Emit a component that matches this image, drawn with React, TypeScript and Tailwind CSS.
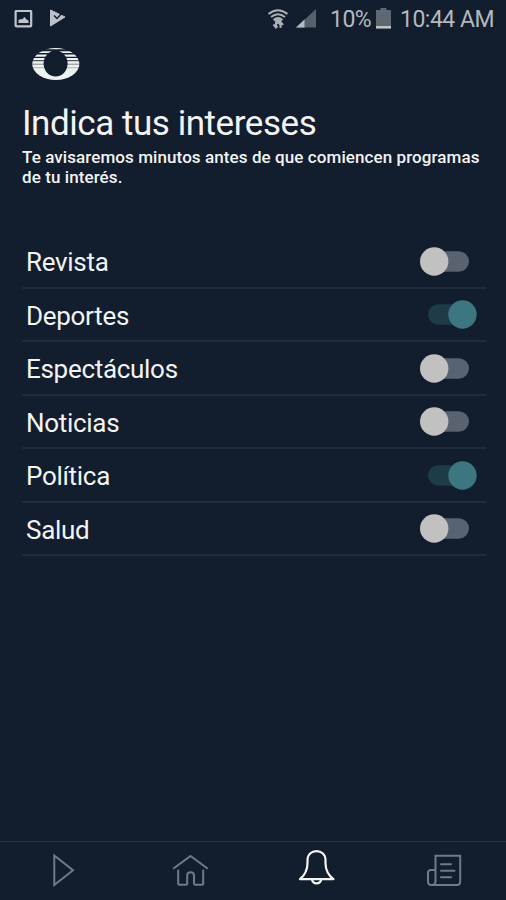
import { useState } from "react";

const interests = [
  { label: "Revista", on: false },
  { label: "Deportes", on: true },
  { label: "Espectáculos", on: false },
  { label: "Noticias", on: false },
  { label: "Política", on: true },
  { label: "Salud", on: false },
];

function StatusBar() {
  return (
    <div className="h-[38px] flex items-center justify-between pl-[14px] pr-[12px] text-[#b4b8be]">
      <div className="flex items-center gap-[16px]">
        <svg width="19" height="19" viewBox="0 0 19 19">
          <rect x="1.6" y="0.8" width="15.6" height="15.6" rx="1" fill="none" stroke="#c0c5cd" strokeWidth="2.2" />
          <path d="M4.5 13V10L7 9L8 9.5L10.5 7L12.5 9.5L14.5 10.5V13Z" fill="#c0c5cd" />
        </svg>
        <svg width="18" height="20" viewBox="0 0 18 20">
          <path d="M1.5 1L16 8L1.5 17Z" fill="#bcc0c7" stroke="#bcc0c7" strokeLinejoin="round" />
          <path d="M5 6.500L8 9.500L13.500 3.500" fill="none" stroke="#121d2d" strokeWidth="1.4" />
        </svg>
      </div>
      <div className="flex items-center">
        <svg className="mr-[8px]" width="21" height="22" viewBox="0 0 21 22" fill="none" stroke="#aaafb6" strokeWidth="2">
          <path d="M1.5 6Q11 -1.5 20.500 6" />
          <path d="M4 9Q11 3.500 18 9" />
          <path d="M6.500 12Q11 8 15.500 12" />
          <path d="M8.500 12.500L11 11L13.500 12.500L11 15Z" fill="#aaafb6" />
          <path d="M9 20V14M6.500 16.500L9 19.500L10.500 18M13.500 13V20M11.500 16L13.500 14L16 17" strokeWidth="2" />
        </svg>
        <svg className="mr-[14px]" width="20" height="20" viewBox="0 0 20 20">
          <path d="M0 18.500L20 0V18.500Z" fill="#56616d" />
          <path d="M0 18.500L8.500 10.500V18.500Z" fill="#b7babf" />
        </svg>
        <span className="w-[41px] pt-px text-[23px] leading-[38px] whitespace-nowrap tracking-[-0.5px]">10%</span>
        <svg className="ml-[5px] mr-[9px]" width="15" height="22" viewBox="0 0 15 22">
          <path d="M0 2H4.500V0H10.500V2H15V20.500H0Z" fill="#5d6873" />
          <path d="M0 18H15V20.500H0Z" fill="#c0c3c7" />
        </svg>
        <span className="w-[94px] pt-px text-[23px] leading-[38px] whitespace-nowrap tracking-[-0.5px]">10:44 AM</span>
      </div>
    </div>
  );
}

function Logo() {
  return (
    <svg width="48" height="34" viewBox="0 0 48 34">
      <ellipse cx="23.800" cy="17" rx="23.600" ry="16" fill="#eef1ef" />
      <ellipse cx="23.600" cy="16.600" rx="12" ry="13" fill="#121d2d" />
      <g stroke="#121d2d">
        <path d="M0 3.300H48" strokeWidth="2" />
        <path d="M0 6.800H48" strokeWidth="1.600" />
        <path d="M0 10.300H48" strokeWidth="1.200" />
        <path d="M0 13.700H48" strokeWidth="0.900" />
        <path d="M0 17.200H48" strokeWidth="0.500" />
        <path d="M0 20.700H48" strokeWidth="0.300" />
      </g>
    </svg>
  );
}

function Toggle({ on, label, onClick }: { on: boolean; label: string; onClick: () => void }) {
  return (
    <button role="switch" aria-checked={on} aria-label={label} onClick={onClick} className="mr-[9px]">
      <svg width="57" height="29" viewBox="0 0 57 29">
        <rect x={on ? 8 : 8.5} y="4.200" width="40.500" height="20.600" rx="10.300" fill={on ? "#1d3c48" : "#596270"} />
        <circle cx={on ? 42.5 : 14.2} cy="14.500" r="14.200" fill={on ? "#3c7781" : "#c1c1c1"} />
      </svg>
    </button>
  );
}

function BottomNav() {
  return (
    <nav className="h-[59px] grid grid-cols-4 items-start border-t border-[#253241] text-[#6f7b8b]">
      <button aria-label="Reproducir" className="flex justify-center pt-[10px]">
        <svg width="26" height="38" viewBox="0 0 26 38" fill="none" stroke="currentColor" strokeWidth="2">
          <path d="M4.300 3.500V33L23 18.200Z" />
        </svg>
      </button>
      <button aria-label="Inicio" className="flex justify-center pt-[10px]">
        <svg
          width="38"
          height="38"
          viewBox="0 0 38 38"
          fill="none"
          stroke="currentColor"
          strokeWidth="2"
          strokeLinecap="round"
          strokeLinejoin="round"
        >
          <path d="M2.800 16.200L19.500 4L36.200 16.200" />
          <path d="M7.200 18.500V31.200Q7.200 32.700 8.700 32.700H14.700Q16.200 32.700 16.200 31.200V23.500Q16.200 20.200 19.600 20.200Q23 20.200 23 23.500V31.200Q23 32.700 24.500 32.700H30.700Q32.200 32.700 32.200 31.200V18.500" />
        </svg>
      </button>
      <button aria-label="Notificaciones" className="flex justify-center pt-[6px] text-[#f4f4f2]">
        <svg
          width="38"
          height="38"
          viewBox="0 0 38 38"
          fill="none"
          stroke="currentColor"
          strokeWidth="2.200"
          strokeLinejoin="round"
        >
          <path d="M3 31.200C8 27 10.500 22 10.500 15V12C10.500 6.500 14.500 3.200 19.500 3.200S28.500 6.500 28.500 12V15C28.500 22 31 27 36.500 31.200Z" />
          <path d="M15 31.500C15.500 34 17.500 35.300 19.600 35.300S23.700 34 24.200 31.500" />
        </svg>
      </button>
      <button aria-label="Noticias" className="flex justify-center pt-[10px]">
        <svg width="38" height="38" viewBox="0 0 38 38" fill="none" stroke="currentColor" strokeWidth="2">
          <path d="M11.500 28.500V3.800H36.200V29.500Q36.200 33 32.700 33H7.500Q4 33 4 29.500V21Q4 18 7 18H11.500" />
          <path d="M11.500 28V29.500Q11.500 33 7.500 33" />
          <path d="M17 12.200H27M17 18.700H30.500M17 25.200H27" strokeLinecap="round" />
        </svg>
      </button>
    </nav>
  );
}

export default function App() {
  const [items, setItems] = useState(interests);

  const toggle = (label: string) =>
    setItems(items.map((item) => (item.label === label ? { ...item, on: !item.on } : item)));

  return (
    <div className="w-full h-[900px] flex flex-col bg-[#121d2d] font-['Roboto',sans-serif] text-[#f2f3f3]">
      <StatusBar />
      <header className="pl-[32px] pt-[9px] h-[67px]">
        <Logo />
      </header>
      <main className="flex-1 pl-[22px] pr-[20px]">
        <h1 className="text-[35px] leading-[38px] whitespace-nowrap tracking-[-0.45px]">Indica tus intereses</h1>
        <p className="mt-[4px] h-[88px] text-[17px] leading-[20px] font-medium whitespace-nowrap tracking-[0.085px]">
          Te avisaremos minutos antes de que comiencen programas
          <br />
          de tu interés.
        </p>
        <ul>
          {items.map((item) => (
            <li
              key={item.label}
              className="h-[53.500px] flex items-center justify-between pt-[1px] pl-[4px] border-b-2 border-[#202c3a]"
            >
              <span className="pt-[2px] text-[26px] leading-[30px] tracking-[-0.3px]">{item.label}</span>
              <Toggle on={item.on} label={item.label} onClick={() => toggle(item.label)} />
            </li>
          ))}
        </ul>
      </main>
      <BottomNav />
    </div>
  );
}
